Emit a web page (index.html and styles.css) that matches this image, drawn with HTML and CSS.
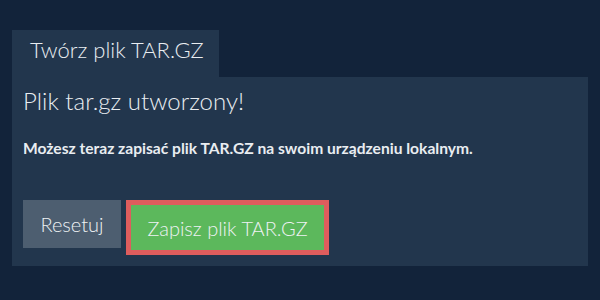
FILE: index.html
```html
<!DOCTYPE html>
<html lang="pl">
<head>
<meta charset="utf-8">
<link rel="stylesheet" href="styles.css">
</head>
<body>
<div class="wrap">
  <div class="tab">Twórz plik TAR.GZ</div>
  <div class="panel">
    <h1 class="title">Plik tar.gz utworzony!</h1>
    <p class="msg">Możesz teraz zapisać plik TAR.GZ na swoim urządzeniu lokalnym.</p>
    <div class="actions">
      <button class="btn btn-reset">Resetuj</button>
      <button class="btn btn-save">Zapisz plik TAR.GZ</button>
    </div>
  </div>
</div>
</body>
</html>
```
FILE: styles.css
```css
html, body {
  margin: 0;
  padding: 0;
}
body {
  background: #12233a;
  font-family: Lato, "Open Sans", sans-serif;
  color: #e9edf1;
  width: 600px;
  height: 300px;
  overflow: hidden;
}
.wrap {
  padding: 30px 12px 0 12px;
}
.tab {
  display: inline-block;
  box-sizing: border-box;
  background: #22364d;
  width: 207px;
  height: 47px;
  line-height: 40px;
  padding: 0 0 7px 18px;
  font-size: 22px;
  font-weight: 300;
  vertical-align: top;
}
.panel {
  background: #22364d;
  height: 189px;
  box-sizing: border-box;
  padding: 8px 11px 0 11px;
}
.title {
  margin: 0;
  font-size: 24px;
  font-weight: 300;
  line-height: 32px;
}
.msg {
  margin: 21px 0 0 0;
  font-size: 15.6px;
  font-weight: 700;
  line-height: 20px;
}
.actions {
  display: flex;
  align-items: flex-start;
  gap: 5px;
  margin-top: 42px;
}
.btn {
  font-family: Lato, "Open Sans", sans-serif;
  color: #eef2f4;
  border: 0;
  margin: 0;
  font-size: 20px;
  font-weight: 300;
  padding: 0;
  cursor: pointer;
}
.btn-reset {
  background: #4d5e70;
  width: 98px;
  height: 48px;
}
.btn-save {
  background: #5cb85c;
  border: 5px solid #de5d5d;
  width: 203px;
  height: 55px;
}
```
